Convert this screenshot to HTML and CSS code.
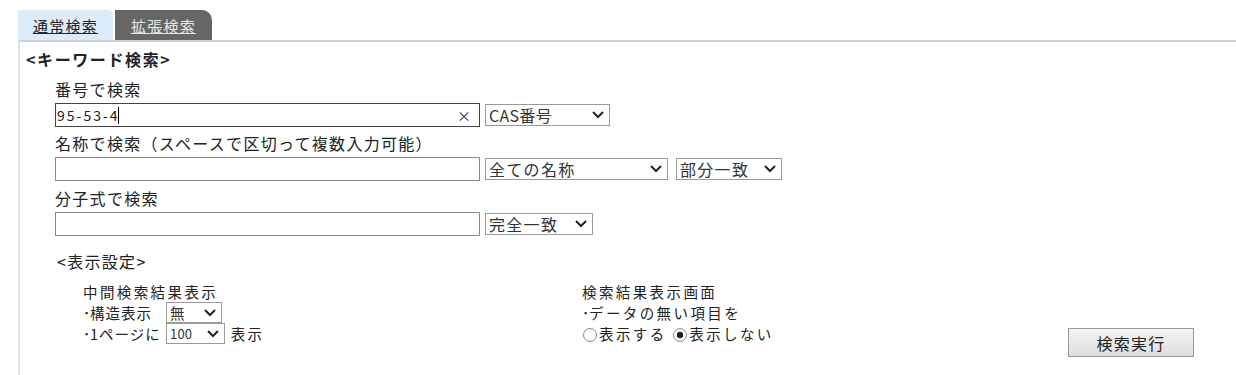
FILE: index.html
```html
<html>
  <head>
    <meta http-equiv="content-type" content="text/html;charset=UTF8">
    <link rel="stylesheet" href="styles.css">
    <title>キーワード検索</title>
  </head>
  <body>
    <!-- tabs -->
    <div class="tabs">
      <div class="tab tab_on"><a href="#">通常検索</a></div>
      <div class="tab tab_off"><a href="#">拡張検索</a></div>
    </div>
    <div class="panel">
      <div class="head">&lt;キーワード検索&gt;</div>
      <div class="form">
        <div class="label first">番号で検索</div>
        <div class="row">
          <div class="input input_focus">95-53-4<span class="caret"></span><span class="clear">×</span></div>
          <div class="select sel_cas">CAS番号<svg class="arrow" viewBox="0 0 12 8"><polyline points="1,1 6,6 11,1"/></svg></div>
        </div>
        <div class="label">名称で検索（スペースで区切って複数入力可能）</div>
        <div class="row">
          <div class="input"></div>
          <div class="select sel_name">全ての名称<svg class="arrow" viewBox="0 0 12 8"><polyline points="1,1 6,6 11,1"/></svg></div>
          <div class="select sel_match">部分一致<svg class="arrow" viewBox="0 0 12 8"><polyline points="1,1 6,6 11,1"/></svg></div>
        </div>
        <div class="label third">分子式で検索</div>
        <div class="row">
          <div class="input"></div>
          <div class="select sel_exact">完全一致<svg class="arrow" viewBox="0 0 12 8"><polyline points="1,1 6,6 11,1"/></svg></div>
        </div>
        <div class="sub_head">&lt;表示設定&gt;</div>
        <div class="settings">
          <div class="col_left">
            <div class="line">中間検索結果表示</div>
            <div class="line"><span class="opt_label"><span class="dot">･</span>構造表示</span><span class="select small sel_mu">無<svg class="arrow" viewBox="0 0 12 8"><polyline points="1,1 6,6 11,1"/></svg></span></div>
            <div class="line"><span class="opt_label"><span class="dot">･</span>1ページに</span><span class="select small sel_num">100<svg class="arrow" viewBox="0 0 12 8"><polyline points="1,1 6,6 11,1"/></svg></span> 表示</div>
          </div>
          <div class="col_right">
            <div class="line">検索結果表示画面</div>
            <div class="line"><span class="dot">･</span>データの無い項目を</div>
            <div class="line">
              <span class="radio"></span>表示する <span class="radio radio_on"></span>表示しない
            </div>
          </div>
          <div class="col_btn">
            <button class="btn">検索実行</button>
          </div>
        </div>
      </div>
    </div>
  </body>
</html>
```

FILE: styles.css
```css
body{
  margin: 0;
  font-family: "Noto Sans CJK JP", "Liberation Sans", sans-serif;
  font-size: 16px;
  letter-spacing: 1.3px;
  color: #222;
  background: #fff;
}
.tabs{
  display: flex;
  padding: 10px 0 0 18px;
}
.tab{
  width: 95px;
  height: 30px;
  line-height: 31px;
  font-size: 15px;
  text-align: center;
}
.tab a{
  text-decoration: underline;
}
.tab_on{
  background: #dcebf9;
  border-top-right-radius: 5px;
}
.tab_on a{
  color: #222;
}
.tab_off{
  width: 97px;
  margin-left: 2px;
  background: #666;
  border-top-right-radius: 10px;
}
.tab_off a{
  color: #e8e8e8;
}
.panel{
  margin-left: 18px;
  border-top: 2px solid #d2d2d2;
  border-left: 2px solid #e2e2e2;
  height: 333px;
}
.head{
  font-weight: bold;
  line-height: 20px;
  padding: 7px 0 0 6px;
  letter-spacing: 1.6px;
}
.form{
  padding-left: 35px;
}
.label{
  line-height: 22px;
  margin-top: 5px;
}
.label.first{
  margin-top: 9px;
}
.label.third{
  margin-top: 6px;
}
.row{
  display: flex;
  align-items: center;
  margin-top: 3px;
}
.input{
  position: relative;
  box-sizing: border-box;
  width: 425px;
  height: 24px;
  border: 1px solid #8a8a8a;
  font-size: 14px;
  line-height: 22px;
  padding-left: 1px;
  letter-spacing: 2px;
}
.input_focus{
  border-color: #444;
}
.caret{
  display: inline-block;
  width: 1px;
  height: 17px;
  background: #000;
  vertical-align: -3px;
  margin-left: -2px;
}
.clear{
  position: absolute;
  right: 8px;
  top: 0;
  font-size: 14px;
  color: #333;
  letter-spacing: 0;
}
.select{
  position: relative;
  box-sizing: border-box;
  height: 22px;
  margin-left: 5px;
  border: 1px solid #9a9a9a;
  line-height: 20px;
  padding-left: 3px;
  color: #333;
}
.select .arrow{
  position: absolute;
  right: 5px;
  top: 6px;
  width: 12px;
  height: 8px;
  fill: none;
  stroke: #222;
  stroke-width: 2;
}
.sel_cas{
  width: 125px;
  letter-spacing: 0.3px;
}
.sel_name{
  width: 183px;
}
.sel_match{
  width: 106px;
  margin-left: 8px;
}
.sel_exact{
  width: 108px;
}
.sub_head{
  margin-top: 14px;
  line-height: 22px;
  padding-left: 2px;
}
.settings{
  display: flex;
  margin-top: 9px;
  padding-left: 28px;
  font-size: 14.5px;
  letter-spacing: 2.4px;
}
.line{
  line-height: 21px;
  height: 21px;
  white-space: nowrap;
}
.dot{
  display: inline-block;
  width: 7px;
  letter-spacing: 0;
}
.opt_label{
  display: inline-block;
  width: 83px;
  letter-spacing: 1px;
}
.col_left{
  width: 499px;
}
.col_right{
  width: 486px;
}
.small{
  display: inline-block;
  vertical-align: top;
  height: 21px;
  line-height: 19px;
  margin-left: 0;
}
.small .arrow{
  top: 6px;
}
.sel_mu{
  width: 56px;
}
.sel_num{
  width: 59px;
  font-size: 13px;
  letter-spacing: 0.2px;
}
.radio{
  display: inline-block;
  box-sizing: border-box;
  width: 14px;
  height: 14px;
  border: 1px solid #888;
  border-radius: 50%;
  vertical-align: -2px;
  margin: 0 2px 0 1px;
}
.radio_on{
  background: radial-gradient(circle, #222 0 3px, #fff 3.6px);
}
.col_btn{
  padding-top: 47px;
}
.btn{
  width: 126px;
  height: 29px;
  font-family: "Noto Sans CJK JP", sans-serif;
  font-size: 16px;
  letter-spacing: 1.3px;
  color: #222;
  border: 1px solid #999;
  background: linear-gradient(#f4f4f4, #dedede);
}
```
